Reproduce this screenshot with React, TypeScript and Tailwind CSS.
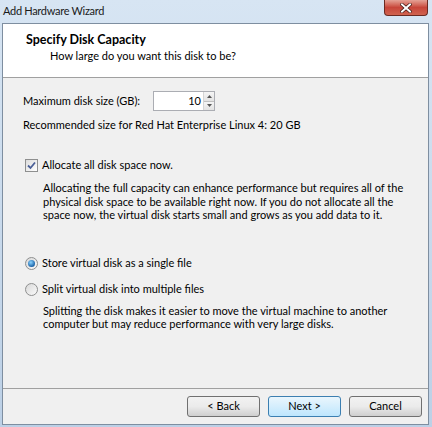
import React from "react";

const FONT = "font-['Lato','Noto_Sans',sans-serif]";

function CheckBox() {
  return (
    <span className="w-[13px] h-[13px] border border-[#8e8f8f] bg-gradient-to-br from-[#dcdcdc] to-[#ffffff] flex items-center justify-center shrink-0">
      <svg width="9" height="9" viewBox="0 0 9 9">
        <path d="M1 4.5 L3.5 7 L8 1.5" fill="none" stroke="#4a5f97" strokeWidth="1.8" />
      </svg>
    </span>
  );
}

function Radio({ on }: { on?: boolean }) {
  return (
    <span className="w-[13px] h-[13px] rounded-full border border-[#8e8f8f] bg-gradient-to-br from-[#d9d9d9] to-[#fafafa] flex items-center justify-center shrink-0">
      {on && (
        <span className="w-[7px] h-[7px] rounded-full bg-[radial-gradient(circle_at_40%_35%,#8ad3ff,#1c64a8_70%,#0d3d6e)]" />
      )}
    </span>
  );
}

function Button({ label, focused }: { label: string; focused?: boolean }) {
  return (
    <button
      className={
        "w-[73px] h-[21px] rounded-[3px] border text-[11px] text-black flex items-center justify-center " +
        (focused
          ? "border-[#3c7fb1] bg-gradient-to-b from-[#eaf6fd] to-[#bee6fd]"
          : "border-[#707070] bg-gradient-to-b from-[#f2f2f2] via-[#ebebeb] to-[#cfcfcf]")
      }
    >
      {label}
    </button>
  );
}

export default function App() {
  return (
    <div className={"w-[432px] h-[427px] bg-gradient-to-b from-[#d7e5f3] to-[#bcd0e6] flex flex-col overflow-hidden " + FONT}>
      {/* title bar */}
      <div className="h-[23px] relative shrink-0">
        <span className="absolute left-[3px] top-[3px] text-[11px] tracking-[-0.3px] text-[#1a1a1a]">Add Hardware Wizard</span>
        <div className="absolute left-[384px] top-0 w-[44px] h-[16px] rounded-b-[4px] border border-t-0 border-[#6b2a22] bg-gradient-to-b from-[#e4a196] via-[#c7453a] to-[#d0634f] flex items-center justify-center">
          <svg width="12" height="10" viewBox="0 0 12 10">
            <path d="M2 1.5 L10 8.5 M10 1.5 L2 8.5" stroke="#3b1510" strokeWidth="3.4" strokeLinecap="square" />
            <path d="M2 1.5 L10 8.5 M10 1.5 L2 8.5" stroke="#ffffff" strokeWidth="2" strokeLinecap="square" />
          </svg>
        </div>
      </div>

      {/* window body */}
      <div className="ml-[2px] mr-[3px] mb-[2px] flex-1 border border-[#7e8ea0] bg-[#f0f0f0] flex flex-col text-[11px] text-black">
        {/* header */}
        <div className="h-[54px] bg-white border-b border-[#a0a0a0] pl-[23px] pt-[8px] shrink-0">
          <div className="font-bold text-[12.5px] leading-[16px]">Specify Disk Capacity</div>
          <div className="pl-[24px] leading-[15px]">How large do you want this disk to be?</div>
        </div>

        {/* content */}
        <div className="flex-1 pl-[20px] pr-[12px] pt-[13px] flex flex-col">
          <div className="flex items-center h-[20px]">
            <span className="w-[130px] whitespace-nowrap">Maximum disk size (GB):</span>
            <div className="w-[62px] h-[20px] border border-[#abadb3] bg-white flex">
              <span className="flex-1 text-right pr-[2px] leading-[18px]">10</span>
              <div className="w-[11px] flex flex-col border-l border-[#d5d5d5]">
                <span className="flex-1 flex items-center justify-center bg-gradient-to-b from-[#f5f5f5] to-[#e3e3e3] border-b border-[#c0c0c0]">
                  <svg width="5" height="3" viewBox="0 0 5 3"><path d="M0 3 L2.5 0 L5 3Z" fill="#555" /></svg>
                </span>
                <span className="flex-1 flex items-center justify-center bg-gradient-to-b from-[#f5f5f5] to-[#e3e3e3]">
                  <svg width="5" height="3" viewBox="0 0 5 3"><path d="M0 0 L2.5 3 L5 0Z" fill="#555" /></svg>
                </span>
              </div>
            </div>
          </div>

          <div className="mt-[6px] leading-[16px]">Recommended size for Red Hat Enterprise Linux 4: 20 GB</div>

          <div className="mt-[24px] flex items-center gap-[4px] pl-[2px] h-[16px]">
            <CheckBox />
            <span>Allocate all disk space now.</span>
          </div>
          <div className="mt-[8px] pl-[20px] leading-[13.5px] whitespace-nowrap">
            Allocating the full capacity can enhance performance but requires all of the
            <br />
            physical disk space to be available right now. If you do not allocate all the
            <br />
            space now, the virtual disk starts small and grows as you add data to it.
          </div>

          <div className="mt-[34px] flex items-center gap-[4px] pl-[2px] h-[16px]">
            <Radio on />
            <span>Store virtual disk as a single file</span>
          </div>
          <div className="mt-[10px] flex items-center gap-[4px] pl-[2px] h-[16px]">
            <Radio />
            <span>Split virtual disk into multiple files</span>
          </div>
          <div className="mt-[6px] pl-[20px] leading-[13.5px] whitespace-nowrap">
            Splitting the disk makes it easier to move the virtual machine to another
            <br />
            computer but may reduce performance with very large disks.
          </div>
        </div>

        {/* footer */}
        <div className="h-[36px] border-t border-[#a0a0a0] flex items-center justify-end gap-[8px] pr-[6px] shrink-0">
          <Button label="< Back" />
          <Button label="Next >" focused />
          <Button label="Cancel" />
        </div>
      </div>
    </div>
  );
}
